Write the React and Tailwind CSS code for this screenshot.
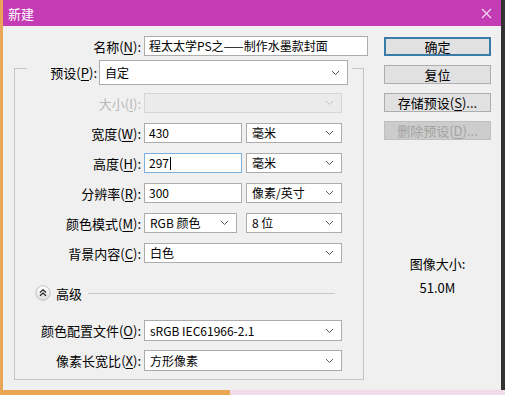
import React from "react";

function Chevron({ color = "#5a5a5a" }) {
  return (
    <svg width="9" height="6" viewBox="0 0 9 6" className="shrink-0">
      <polyline points="1,1 4.5,4.5 8,1" fill="none" stroke={color} strokeWidth="1" />
    </svg>
  );
}

function Key({ label, k }) {
  return (
    <span>
      {label}(<span className="underline underline-offset-2">{k}</span>):
    </span>
  );
}

function Select({ value, w = "w-[198px]", h = "h-[20px]" }) {
  return (
    <div className={`${w} ${h} bg-white border border-[#acacac] flex items-center justify-between pl-[5px] pr-[7px] text-[12px] text-black`}>
      <span>{value}</span>
      <Chevron />
    </div>
  );
}

function Input({ value, w = "w-[98px]", focus, caret }) {
  return (
    <div
      className={`${w} h-[20px] bg-white border flex items-center pl-[4px] text-[12px] text-black ${
        focus ? "border-[#7aaedb]" : "border-[#acacac]"
      }`}
    >
      <span>{value}</span>
      {caret && <span className="w-px h-[13px] bg-black ml-px" />}
    </div>
  );
}

function Row({ label, k, disabled, children }) {
  return (
    <div className="grid grid-cols-[126px_198px] gap-x-[3px] items-center h-[20px]">
      <div className={`text-right text-[13px] ${disabled ? "text-[#b8b8b8]" : "text-black"}`}>
        <Key label={label} k={k} />
      </div>
      <div className="flex justify-between">{children}</div>
    </div>
  );
}

function Button({ children, primary, disabled }) {
  return (
    <div
      className={`h-[19px] w-[107px] flex items-center justify-center text-[13px] ${
        primary
          ? "border-2 border-[#3a7ba8] bg-[#e1e1e1] text-black"
          : disabled
          ? "border border-[#bfbfbf] bg-[#cccccc] text-[#a3a3a3]"
          : "border border-[#adadad] bg-[#e1e1e1] text-black"
      }`}
    >
      {children}
    </div>
  );
}

export default function App() {
  return (
    <div className="w-[505px] h-[395px] overflow-hidden flex flex-col bg-[#2e2e2e] font-['Noto_Sans_CJK_SC',sans-serif] leading-none">
      <div className="flex h-[390px]">
        <div className="w-[3px] bg-[#e9a558]" />
        <div className="w-[498px] flex flex-col bg-[#f0f0f0]">
          <div className="h-[26px] bg-[#c43cb4] flex items-center justify-between pl-[5px] pr-[9px]">
            <span className="text-white text-[13px]">新建</span>
            <svg width="11" height="11" viewBox="0 0 11 11">
              <line x1="1" y1="1" x2="10" y2="10" stroke="#f4d8f0" strokeWidth="1.3" />
              <line x1="10" y1="1" x2="1" y2="10" stroke="#f4d8f0" strokeWidth="1.3" />
            </svg>
          </div>

          <div className="flex pt-[10px]">
            <div className="w-[367px] flex flex-col">
              <div className="grid grid-cols-[138px_224px] gap-x-[3px] items-center h-[20px]">
                <div className="text-right text-[13px] text-black">
                  <Key label="名称" k="N" />
                </div>
                <Input value="程太太学PS之——制作水墨款封面" w="w-[224px]" />
              </div>

              <div className="ml-[11px] mt-[12px] w-[350px] h-[312px] border border-[#c4c4c4] flex flex-col">
                <div className="-mt-[9px] ml-[12px] w-[325px] h-[25px] bg-[#f0f0f0] flex items-center justify-end gap-[2px] pr-[4px]">
                  <span className="text-[13px] text-black">
                    <Key label="预设" k="P" />
                  </span>
                  <Select value="自定" w="w-[249px]" h="h-[25px]" />
                </div>

                <div className="flex flex-col gap-[10px] mt-[8px]">
                  <Row label="大小" k="I" disabled>
                    <div className="w-[198px] h-[20px] bg-[#ebebeb] border border-[#d6d6d6] flex items-center justify-end pr-[7px]">
                      <Chevron color="#c2c2c2" />
                    </div>
                  </Row>
                  <Row label="宽度" k="W">
                    <Input value="430" />
                    <Select value="毫米" w="w-[96px]" />
                  </Row>
                  <Row label="高度" k="H">
                    <Input value="297" focus caret />
                    <Select value="毫米" w="w-[96px]" />
                  </Row>
                  <Row label="分辨率" k="R">
                    <Input value="300" />
                    <Select value="像素/英寸" w="w-[96px]" />
                  </Row>
                  <Row label="颜色模式" k="M">
                    <Select value="RGB 颜色" w="w-[93px]" />
                    <Select value="8 位" w="w-[96px]" />
                  </Row>
                  <Row label="背景内容" k="C">
                    <Select value="白色" />
                  </Row>
                </div>

                <div className="flex items-center mt-[22px] ml-[20px] h-[16px]">
                  <svg width="16" height="16" viewBox="0 0 16 16">
                    <defs>
                      <linearGradient id="adv" x1="0" y1="0" x2="0" y2="1">
                        <stop offset="0" stopColor="#ffffff" />
                        <stop offset="1" stopColor="#dcdcdc" />
                      </linearGradient>
                    </defs>
                    <circle cx="8" cy="8" r="7.2" fill="url(#adv)" stroke="#c2c2c2" />
                    <polyline points="5,7.5 8,4.8 11,7.5" fill="none" stroke="#222" strokeWidth="1.2" />
                    <polyline points="5,10.8 8,8.1 11,10.8" fill="none" stroke="#222" strokeWidth="1.2" />
                  </svg>
                  <span className="ml-[5px] text-[13px] text-black">高级</span>
                  <div className="ml-[6px] w-[247px] h-px bg-[#c8c8c8]" />
                </div>

                <div className="flex flex-col gap-[9px] mt-[19px]">
                  <div className="grid grid-cols-[126px_198px] gap-x-[3px] items-center h-[21px]">
                    <div className="text-right text-[13px] text-black">
                      <Key label="颜色配置文件" k="O" />
                    </div>
                    <Select value="sRGB IEC61966-2.1" h="h-[21px]" />
                  </div>
                  <div className="grid grid-cols-[126px_198px] gap-x-[3px] items-center h-[21px]">
                    <div className="text-right text-[13px] text-black">
                      <Key label="像素长宽比" k="X" />
                    </div>
                    <Select value="方形像素" h="h-[21px]" />
                  </div>
                </div>
              </div>
            </div>

            <div className="ml-[14px] pt-[1px] flex flex-col">
              <div className="flex flex-col gap-[9px]">
                <Button primary>确定</Button>
                <Button>复位</Button>
                <Button>
                  存储预设(<span className="underline underline-offset-2">S</span>)...
                </Button>
                <Button disabled>
                  删除预设(<span className="underline underline-offset-2">D</span>)...
                </Button>
              </div>
              <div className="mt-[116px] w-[107px] flex flex-col items-center gap-[8px] text-[13px] text-black leading-[16px]">
                <span>图像大小:</span>
                <span>51.0M</span>
              </div>
            </div>
          </div>
        </div>
        <div className="w-[4px] bg-[#333333]" />
      </div>
      <div className="h-[5px] flex">
        <div className="w-[230px] bg-[#eaa651]" />
        <div className="flex-1 bg-[#f1dbe8]" />
      </div>
    </div>
  );
}
